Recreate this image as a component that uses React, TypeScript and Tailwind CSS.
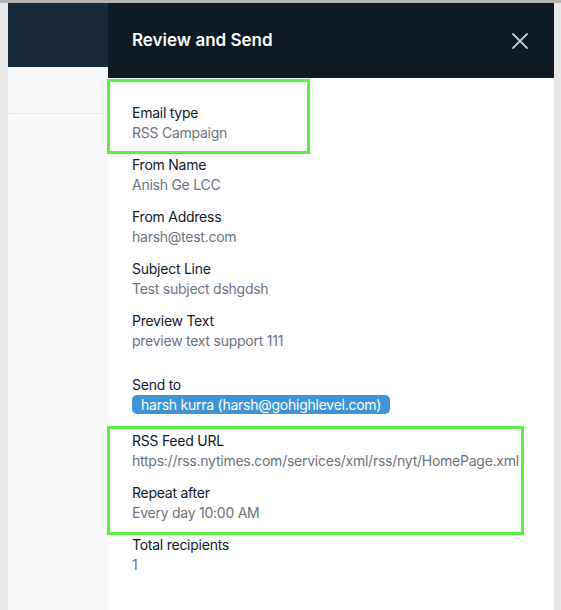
import React from "react";

interface Field {
  label: string;
  value: string;
}

const topFields: Field[] = [
  { label: "Email type", value: "RSS Campaign" },
  { label: "From Name", value: "Anish Ge LCC" },
  { label: "From Address", value: "harsh@test.com" },
  { label: "Subject Line", value: "Test subject dshgdsh" },
  { label: "Preview Text", value: "preview text support 111" },
];

const rssFields: Field[] = [
  { label: "RSS Feed URL", value: "https://rss.nytimes.com/services/xml/rss/nyt/HomePage.xml" },
  { label: "Repeat after", value: "Every day 10:00 AM" },
  { label: "Total recipients", value: "1" },
];

function FieldRow({ field }: { field: Field }) {
  return (
    <div className="flex flex-col">
      <span className="text-[14px] leading-[20px] tracking-[-0.25px] text-[#111827]">{field.label}</span>
      <span className="whitespace-nowrap text-[14px] leading-[20px] tracking-[-0.25px] text-[#6b7280]">
        {field.value}
      </span>
    </div>
  );
}

export default function App() {
  return (
    <div
      className="flex h-[610px] w-[561px] flex-col overflow-hidden bg-[#e8e8e8]"
      style={{ fontFamily: "Inter, 'Noto Sans', sans-serif" }}
    >
      <div className="h-[3px] w-full bg-[#b4b4b4]" />
      <div className="flex flex-1">
        {/* page behind the drawer */}
        <div className="w-[8px] bg-[#e8e8e8]" />
        <div className="flex w-[100px] flex-col">
          <div className="h-[64px] bg-[#162a3a]" />
          <div className="flex-1 bg-[#f7f8fa] pt-[46px]">
            <div className="border-t border-dotted border-[#d6d8dc]" />
          </div>
        </div>

        {/* drawer */}
        <div className="relative flex w-[446px] flex-col bg-white">
          <div className="flex h-[75px] items-center justify-between bg-[#0d1a24] pl-[24px] pr-[26px]">
            <h2 className="text-[17px] font-semibold text-white">Review and Send</h2>
            <button className="text-[#b9cad8]">
              <svg width="16" height="16" viewBox="0 0 16 16" fill="none">
                <path d="M1 1l14 14M15 1L1 15" stroke="currentColor" strokeWidth="1.8" strokeLinecap="round" />
              </svg>
            </button>
          </div>

          <div className="flex flex-col px-[24px] pt-[25px]">
            <div className="flex flex-col gap-[12px]">
              {topFields.map((f) => (
                <FieldRow key={f.label} field={f} />
              ))}
            </div>

            <div className="mt-[24px] flex flex-col">
              <span className="text-[14px] leading-[20px] tracking-[-0.25px] text-[#111827]">Send to</span>
              <div className="flex">
                <span className="rounded-[5px] bg-[#3d95d7] px-[9px] text-[14px] leading-[19px] tracking-[-0.25px] text-white">
                  harsh kurra (harsh@gohighlevel.com)
                </span>
              </div>
            </div>

            <div className="mt-[17px] flex flex-col gap-[12px]">
              {rssFields.map((f) => (
                <FieldRow key={f.label} field={f} />
              ))}
            </div>
          </div>

          {/* highlight outlines */}
          <div className="pointer-events-none absolute left-[-1px] top-[76px] h-[75px] w-[203px] border-[3px] border-[#5bef46]" />
          <div className="pointer-events-none absolute left-[-1px] top-[423px] h-[109px] w-[417px] border-[3px] border-[#5bef46]" />
        </div>
        <div className="flex-1 bg-[#e8e8e8]" />
      </div>
    </div>
  );
}
